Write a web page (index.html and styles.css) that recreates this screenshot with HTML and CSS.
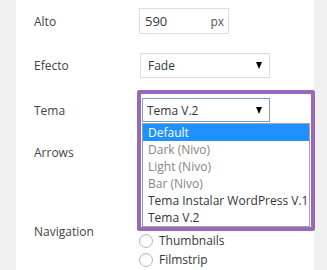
FILE: index.html
```html
<!DOCTYPE html>
<html>
<head>
<meta charset="utf-8">
<link rel="stylesheet" href="styles.css">
</head>
<body>
<div class="panel">
  <div class="row row-alto">
    <div class="label">Alto</div>
    <div class="input"><span>590</span><span class="unit">px</span></div>
  </div>
  <div class="row row-efecto">
    <div class="label">Efecto</div>
    <div class="select sel-efecto"><span>Fade</span><span class="arrow"></span></div>
  </div>
  <div class="row row-tema">
    <div class="label">Tema</div>
    <div class="select sel-tema"><span>Tema V.2</span><span class="arrow"></span></div>
  </div>
  <div class="row row-arrows">
    <div class="label">Arrows</div>
    <div class="radios">
      <div class="radio"></div>
      <div class="radio"></div>
    </div>
  </div>
  <div class="row row-nav">
    <div class="label">Navigation</div>
    <div class="radios">
      <div class="radio"></div>
      <div class="radio"></div>
      <div class="radio"><span class="circle"></span>Thumbnails</div>
      <div class="radio"><span class="circle"></span>Filmstrip</div>
    </div>
  </div>

  <div class="highlight"></div>
  <ul class="dropdown">
    <li class="active">Default</li>
    <li class="muted">Dark (Nivo)</li>
    <li class="muted">Light (Nivo)</li>
    <li class="muted">Bar (Nivo)</li>
    <li>Tema Instalar WordPress V.1</li>
    <li>Tema V.2</li>
  </ul>
</div>
</body>
</html>
```

FILE: styles.css
```css
html, body {
  margin: 0;
  padding: 0;
  background: #f1f1f1;
  font-family: "Open Sans", "Liberation Sans", sans-serif;
  font-size: 12px;
  color: #444;
  overflow: hidden;
}

.panel {
  position: relative;
  margin-left: 16px;
  width: 298px;
  height: 270px;
  background: #fff;
  padding-top: 8px;
  box-sizing: border-box;
}

.row {
  display: flex;
  align-items: center;
}

.label {
  width: 105px;
  padding-left: 18px;
  flex: none;
  color: #444;
}

.row-efecto { margin-top: 19px; }
.row-tema { margin-top: 20px; }
.row-arrows { margin-top: 11px; }
.row-nav { margin-top: 22px; }

.input {
  width: 90px;
  height: 26px;
  box-sizing: border-box;
  border: 1px solid #ddd;
  display: flex;
  align-items: center;
  justify-content: space-between;
  padding: 0 4px 0 5px;
  color: #32373c;
  font-size: 13px;
}

.input .unit { font-size: 12px; color: #555; }

.select {
  height: 25px;
  box-sizing: border-box;
  border: 1px solid #ddd;
  display: flex;
  align-items: center;
  justify-content: space-between;
  padding: 0 7px 0 7px;
  color: #32373c;
  font-size: 12px;
}

.sel-efecto { width: 130px; margin-left: 1px; }

.sel-tema {
  width: 128px;
  height: 24px;
  margin-left: 3px;
  border-color: #7e9fc9;
  padding-left: 4px;
}

.arrow {
  width: 0;
  height: 0;
  border-left: 3.5px solid transparent;
  border-right: 3.5px solid transparent;
  border-top: 7px solid #000;
}

.radios {
  display: flex;
  flex-direction: column;
}

.radio {
  height: 19px;
  display: flex;
  align-items: center;
  gap: 6px;
  font-size: 12px;
  color: #32373c;
}

.circle {
  width: 14px;
  height: 14px;
  box-sizing: border-box;
  border: 1px solid #b4b9be;
  border-radius: 50%;
  background: #fff;
  box-shadow: inset 0 1px 2px rgba(0,0,0,0.08);
}

.highlight {
  position: absolute;
  left: 121px;
  top: 90px;
  width: 178px;
  height: 141px;
  box-sizing: border-box;
  border: 4px solid #9a68b8;
  border-radius: 2px;
  pointer-events: none;
  z-index: 3;
}

.dropdown {
  position: absolute;
  left: 126px;
  top: 123px;
  width: 168px;
  margin: 0;
  padding: 0;
  list-style: none;
  background: #fff;
  border: 1px solid #a5a5a5;
  border-left-color: #7e9fc9;
  box-sizing: border-box;
  z-index: 2;
}

.dropdown li {
  height: 17px;
  line-height: 17px;
  padding-left: 5px;
  font-size: 12px;
  color: #32373c;
  white-space: nowrap;
}

.dropdown li.active {
  background: #1e90ff;
  color: #fff;
}

.dropdown li.muted { color: #8a8585; }
```
